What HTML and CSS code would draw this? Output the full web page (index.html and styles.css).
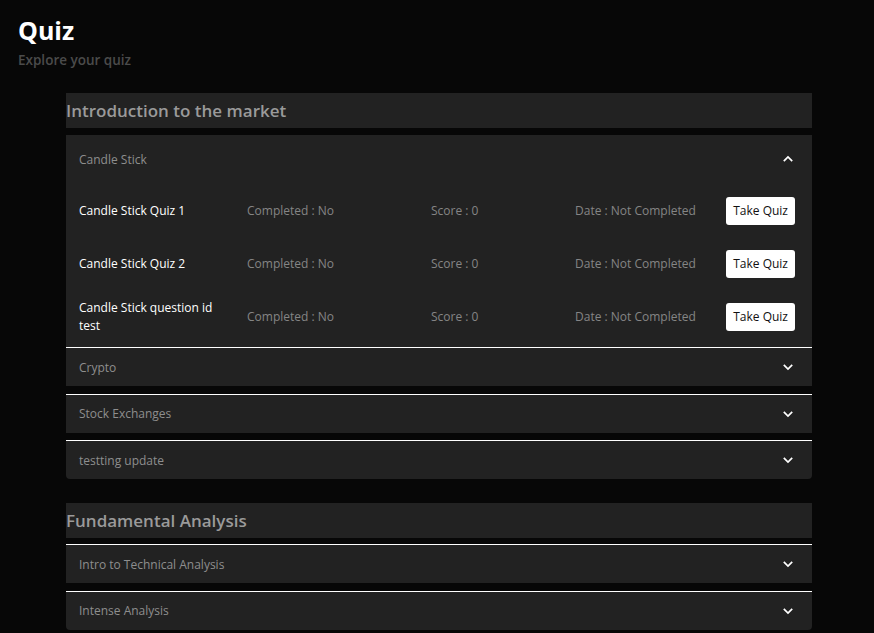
FILE: index.html
```html
<!DOCTYPE html>
<html lang="en">
<head>
<meta charset="utf-8">
<title>Quiz</title>
<link rel="stylesheet" href="styles.css">
</head>
<body>
<header class="page-head">
  <h1 class="title">Quiz</h1>
  <p class="subtitle">Explore your quiz</p>
</header>
<main class="sections">
  <section class="section">
    <h2 class="section-title">Introduction to the market</h2>
    <div class="acc acc-open">
      <div class="acc-head">
        <span class="acc-title">Candle Stick</span>
        <svg class="chev" width="12" height="8" viewBox="0 0 12 8"><polyline points="1.8,6.2 6,2 10.2,6.2" fill="none" stroke="#fff" stroke-width="1.7"/></svg>
      </div>
      <div class="acc-body">
        <div class="row">
          <span class="q-name">Candle Stick Quiz 1</span>
          <span class="q-meta">Completed : No</span>
          <span class="q-meta">Score : 0</span>
          <span class="q-meta">Date : Not Completed</span>
          <button class="btn">Take Quiz</button>
        </div>
        <div class="row">
          <span class="q-name">Candle Stick Quiz 2</span>
          <span class="q-meta">Completed : No</span>
          <span class="q-meta">Score : 0</span>
          <span class="q-meta">Date : Not Completed</span>
          <button class="btn">Take Quiz</button>
        </div>
        <div class="row">
          <span class="q-name">Candle Stick question id test</span>
          <span class="q-meta">Completed : No</span>
          <span class="q-meta">Score : 0</span>
          <span class="q-meta">Date : Not Completed</span>
          <button class="btn">Take Quiz</button>
        </div>
      </div>
    </div>
    <div class="acc acc-line acc-flush">
      <div class="acc-head">
        <span class="acc-title">Crypto</span>
        <svg class="chev" width="12" height="8" viewBox="0 0 12 8"><polyline points="1.8,1.8 6,6 10.2,1.8" fill="none" stroke="#fff" stroke-width="1.7"/></svg>
      </div>
    </div>
    <div class="acc acc-line">
      <div class="acc-head">
        <span class="acc-title">Stock Exchanges</span>
        <svg class="chev" width="12" height="8" viewBox="0 0 12 8"><polyline points="1.8,1.8 6,6 10.2,1.8" fill="none" stroke="#fff" stroke-width="1.7"/></svg>
      </div>
    </div>
    <div class="acc acc-line acc-last">
      <div class="acc-head">
        <span class="acc-title">testting update</span>
        <svg class="chev" width="12" height="8" viewBox="0 0 12 8"><polyline points="1.8,1.8 6,6 10.2,1.8" fill="none" stroke="#fff" stroke-width="1.7"/></svg>
      </div>
    </div>
  </section>
  <section class="section">
    <h2 class="section-title">Fundamental Analysis</h2>
    <div class="acc acc-line acc-first">
      <div class="acc-head">
        <span class="acc-title">Intro to Technical Analysis</span>
        <svg class="chev" width="12" height="8" viewBox="0 0 12 8"><polyline points="1.8,1.8 6,6 10.2,1.8" fill="none" stroke="#fff" stroke-width="1.7"/></svg>
      </div>
    </div>
    <div class="acc acc-line acc-last">
      <div class="acc-head">
        <span class="acc-title">Intense Analysis</span>
        <svg class="chev" width="12" height="8" viewBox="0 0 12 8"><polyline points="1.8,1.8 6,6 10.2,1.8" fill="none" stroke="#fff" stroke-width="1.7"/></svg>
      </div>
    </div>
  </section>
</main>
</body>
</html>
```
FILE: styles.css
```css
html, body {
  margin: 0;
  padding: 0;
  background: #070707;
}
body {
  font-family: "Open Sans", "Liberation Sans", sans-serif;
  color: #fff;
}
.page-head {
  padding: 14px 18px 0;
}
.title {
  margin: 0;
  font-size: 25px;
  font-weight: 700;
  line-height: 32px;
  color: #fff;
}
.subtitle {
  margin: 6px 0 0;
  font-size: 13.5px;
  font-weight: 600;
  line-height: 16px;
  color: #4b4b4b;
}
.sections {
  width: 746px;
  margin: 25px 0 0 66px;
}
.section {
  margin-bottom: 24px;
}
.section-title {
  margin: 0;
  height: 35px;
  line-height: 35px;
  background: #222;
  font-size: 17px;
  font-weight: 600;
  color: #9a9a9a;
}
.acc {
  background: #222;
  margin-top: 7px;
}
.acc-line {
  border-top: 1px solid #fff;
  margin-top: 7.5px;
}
.acc-flush {
  margin-top: 0;
}
.acc-first {
  margin-top: 6px;
}
.acc-last {
  border-radius: 0 0 4px 4px;
}
.acc-head {
  display: flex;
  align-items: center;
  justify-content: space-between;
  height: 38px;
  padding: 0 18px 0 13px;
}
.acc-open .acc-head {
  height: 48px;
}
.acc-title {
  font-size: 12px;
  color: #8e8e8e;
}
.chev {
  display: block;
}
.acc-body {
  padding: 1px 17px 4px 13px;
}
.row {
  display: grid;
  grid-template-columns: 168px 184px 144px 1fr auto;
  align-items: center;
  height: 53px;
}
.q-name {
  font-size: 12px;
  font-weight: 500;
  line-height: 18px;
  color: #fff;
  max-width: 150px;
}
.q-meta {
  font-size: 12px;
  color: #858585;
}
.btn {
  font-family: inherit;
  font-size: 12px;
  color: #111;
  background: #fff;
  border: none;
  border-radius: 3px;
  height: 28px;
  padding: 0 7px;
  cursor: pointer;
}
```
